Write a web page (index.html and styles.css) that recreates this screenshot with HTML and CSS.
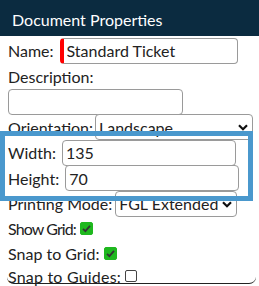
FILE: index.html
```html
<!DOCTYPE html>
<html>
<head>
<meta charset="utf-8">
<link rel="stylesheet" href="styles.css">
</head>
<body>
<div class="panel">
  <div class="header">Document Properties</div>
  <div class="form">
    <div class="row"><label>Name:</label><input class="text required" value="Standard Ticket"></div>
    <div class="row"><label>Description:</label></div>
    <div class="row"><input class="text desc" value=""></div>
    <div class="row"><label>Orientation:</label><div class="select orient">Landscape<svg class="chev" viewBox="0 0 10 7" width="10" height="7"><path d="M1 1.2 L5 5.2 L9 1.2" fill="none" stroke="#111" stroke-width="2.2"/></svg></div></div>
    <div class="row"><label>Width:</label><input class="text" value="135"></div>
    <div class="row"><label>Height:</label><input class="text" value="70"></div>
    <div class="row"><label>Printing Mode:</label><div class="select mode">FGL Extended<svg class="chev" viewBox="0 0 10 7" width="10" height="7"><path d="M1 1.2 L5 5.2 L9 1.2" fill="none" stroke="#111" stroke-width="2.2"/></svg></div></div>
    <div class="row crow"><label class="tight">Show Grid:</label><span class="check on"><svg viewBox="0 0 13 13" width="13" height="13"><path d="M3 6.8 L5.4 9.2 L10 3.8" fill="none" stroke="#333" stroke-width="1.8"/></svg></span></div>
    <div class="row crow"><label>Snap to Grid:</label><span class="check on"><svg viewBox="0 0 13 13" width="13" height="13"><path d="M3 6.8 L5.4 9.2 L10 3.8" fill="none" stroke="#333" stroke-width="1.8"/></svg></span></div>
    <div class="row crow last"><label class="wide">Snap to Guides:</label><span class="check"></span></div>
  </div>
  <div class="highlight"></div>
</div>
</body>
</html>
```
FILE: styles.css
```css
* { box-sizing: border-box; }
body {
  margin: 0;
  background: #fff;
  font-family: Lato, "Liberation Sans", sans-serif;
  font-size: 16px;
  color: #222;
}
.panel {
  position: relative;
  width: 259px;
  height: 286px;
  overflow: hidden;
}
.header {
  height: 36px;
  background: #0b2b40;
  color: #fff;
  font-size: 16px;
  padding-left: 12px;
  display: flex;
  align-items: center;
  padding-top: 2px;
}
.form {
  margin: 0 3px 0 7px;
  padding: 2px 0 0 1px;
  border-bottom: 1.5px solid #222;
  border-radius: 0 0 7px 7px;
  height: 248px;
}
.row {
  display: flex;
  align-items: center;
  height: 25.5px;
  white-space: nowrap;
}
.crow { height: 24.5px; }
.last { height: 22px; align-items: flex-start; padding-top: 1px; }
.row label { margin-right: 6px; }
.tight { letter-spacing: -0.9px; }
.wide { letter-spacing: 0.2px; }
.text {
  width: 174px;
  height: 26px;
  border: 1px solid #9a9a9a;
  border-radius: 4px;
  font-family: inherit;
  font-size: 16px;
  color: #222;
  padding: 0 3px;
  background: #fff;
}
.required { border-left: 4px solid #f00; padding-left: 3px; width: 178px; }
.desc { width: 175px; }
.select {
  position: relative;
  height: 26px;
  border: 1px solid #9a9a9a;
  border-radius: 4px;
  padding: 0 16px 0 3px;
  display: flex;
  align-items: center;
  overflow: hidden;
  background: #fff;
}
.orient { width: 158px; margin-left: -4px; }
.mode { width: 122px; margin-left: -3px; }
.chev { position: absolute; right: 4px; top: 9px; }
.check {
  width: 12px;
  height: 12px;
  border: 1px solid #444;
  border-radius: 2px;
  background: #fff;
  display: inline-block;
  margin-left: -2px;
  position: relative;
}
.last .check { margin-top: 3px; }
.check.on { background: #1fb81f; border-color: #1fb81f; width: 13px; height: 13px; }
.check svg { position: absolute; left: -1px; top: -1px; }
.highlight {
  position: absolute;
  left: 0;
  top: 131px;
  width: 253px;
  height: 70px;
  border: 5px solid #4a98cd;
}
```
